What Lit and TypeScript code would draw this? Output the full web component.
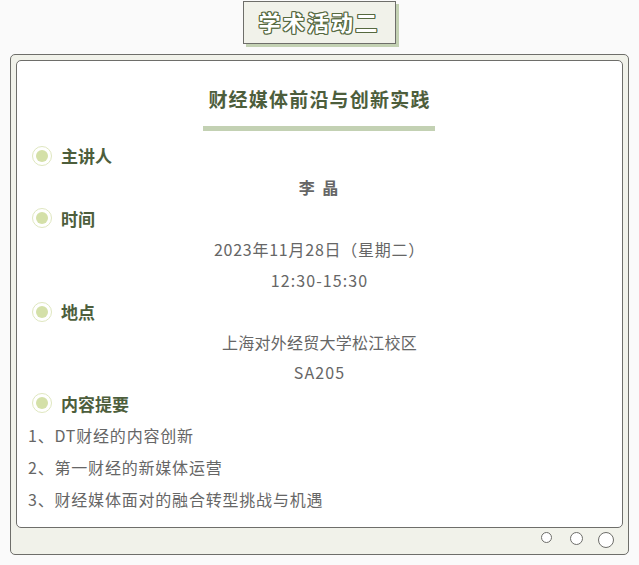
import { LitElement, html, css } from "lit";
import { customElement } from "lit/decorators.js";

@customElement("app-root")
export class AppRoot extends LitElement {
  static styles = css`
    :host { display: block; width: 639px; height: 565px; background: #fafafa; overflow: hidden;
      font-family: "Noto Sans CJK SC", "Noto Sans", sans-serif; box-sizing: border-box; padding-top: 1px; }
    .badge { width: 153px; height: 43px; box-sizing: border-box; margin: 0 0 10px 243px; padding: 0 1px 3px 0;
      border: 1px solid #6e6e6a; background: #f1f2ea; box-shadow: 3px 3px 0 #c3d1b3;
      display: flex; align-items: center; justify-content: center;
      font-size: 22px; font-weight: 700; letter-spacing: 2.2px; color: #fff;
      text-shadow: 1px 0 0 #56693f, -1px 0 0 #56693f, 0 1px 0 #56693f, 0 -1px 0 #56693f,
        1px 1px 0 #56693f, -1px -1px 0 #56693f, 1px -1px 0 #56693f, -1px 1px 0 #56693f; }
    .frame { margin: 0 10px; width: 619px; height: 501px; box-sizing: border-box; padding: 5px 5px 0;
      border: 1px solid #6e6e6a; border-radius: 5px; background: #f1f2ea; position: relative; }
    .card { height: 468px; box-sizing: border-box; border: 1px solid #6e6e6a; border-radius: 5px; background: #fff;
      padding: 23px 11px 0; }
    h1 { margin: 0; text-align: center; font-size: 19px; line-height: 30px; font-weight: 700; color: #4d5e3c; letter-spacing: 1.2px; }
    .bar { width: 232px; height: 5px; background: #c3d1b3; margin: 12px 0 9px 175px; }
    .row { height: 31px; display: flex; align-items: center; }
    .dot { width: 20px; height: 20px; box-sizing: border-box; margin-left: 4px; margin-right: 9px;
      border-radius: 50%; border: 1px solid #dfe7bf; background: #fff; display: flex; align-items: center; justify-content: center; }
    .dot i { display: block; width: 12px; height: 12px; border-radius: 50%; background: #d4e0a8; }
    .label { font-size: 17px; font-weight: 700; color: #4d5e3c; }
    .center { justify-content: center; font-size: 16px; color: #666; }
    .name { font-weight: 700; letter-spacing: 2px; height: 32.2px; }
    .date { letter-spacing: 0.75px; height: 31.2px; }
    .time { letter-spacing: 1.1px; height: 32.2px; }
    .place { letter-spacing: 0.25px; height: 31.2px; }
    .room { letter-spacing: 1.1px; height: 29.4px; }
    .list { font-size: 16px; color: #666; letter-spacing: 0.8px; height: 32px; }
    .short { height: 30px; }
    .tall { height: 32px; }
    .rings { position: absolute; top: 477px; right: 14px; display: flex; align-items: flex-start; }
    .rings span { display: block; border: 1px solid #6e6e6a; border-radius: 50%; background: #fff; box-sizing: border-box; }
    .r1 { width: 11px; height: 11px; margin-right: 18px; }
    .r2 { width: 13px; height: 13px; margin-right: 15px; }
    .r3 { width: 16px; height: 16px; }
  `;

  private head(t: string, cls = "") {
    return html`<div class="row ${cls}"><span class="dot"><i></i></span><span class="label">${t}</span></div>`;
  }

  render() {
    return html`
      <div class="badge">学术活动二</div>
      <div class="frame">
        <div class="card">
          <h1>财经媒体前沿与创新实践</h1>
          <div class="bar"></div>
          ${this.head("主讲人")}
          <div class="row center name">李 晶</div>
          ${this.head("时间", "short")}
          <div class="row center date">2023年11月28日（星期二）</div>
          <div class="row center time">12:30-15:30</div>
          ${this.head("地点", "short")}
          <div class="row center place">上海对外经贸大学松江校区</div>
          <div class="row center room">SA205</div>
          ${this.head("内容提要", "tall")}
          <div class="row list">1、DT财经的内容创新</div>
          <div class="row list">2、第一财经的新媒体运营</div>
          <div class="row list">3、财经媒体面对的融合转型挑战与机遇</div>
        </div>
        <div class="rings"><span class="r1"></span><span class="r2"></span><span class="r3"></span></div>
      </div>
    `;
  }
}
